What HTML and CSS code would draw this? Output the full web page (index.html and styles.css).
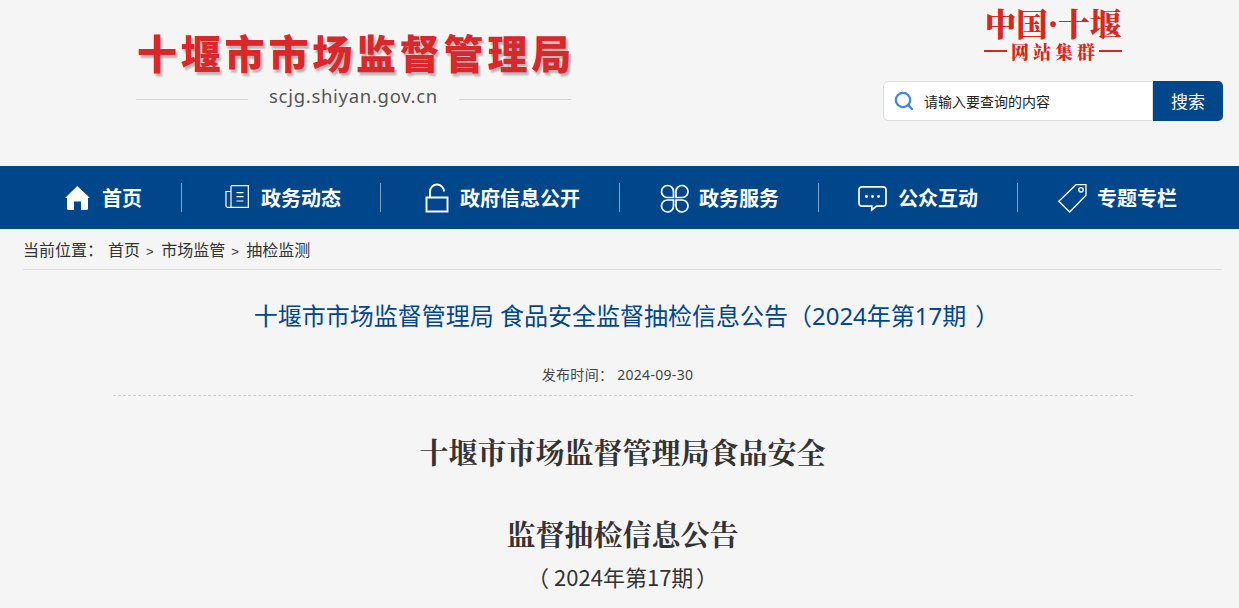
FILE: index.html
```html
<!DOCTYPE html>
<html lang="zh-CN">
<head>
    <meta charset="UTF-8">
    <title>食品安全监督抽检信息公告</title>
    <link rel="stylesheet" href="styles.css">
</head>
<body>
    <!-- 头部 -->
    <header class="header">
        <div class="logo">
            <div class="logo-name">十堰市市场监督管理局</div>
            <div class="logo-sub"><span class="logo-url">scjg.shiyan.gov.cn</span></div>
        </div>
        <div class="header-right">
            <div class="group-logo">
                <div class="group-name">中国·十堰</div>
                <div class="group-sub"><span>网站集群</span></div>
            </div>
            <form class="search">
                <div class="search-box">
                    <svg class="search-icon" viewBox="0 0 20 20" width="20" height="20">
                        <circle cx="9" cy="9" r="7.2" fill="none" stroke="#3f86e6" stroke-width="2.2"/>
                        <path d="M14.2 14.2L18 18" fill="none" stroke="#3f86e6" stroke-width="2.4" stroke-linecap="round"/>
                    </svg>
                    <span class="search-hint">请输入要查询的内容</span>
                </div>
                <button class="search-btn" type="button">搜索</button>
            </form>
        </div>
    </header>

    <!-- 导航 -->
    <nav class="nav">
        <a class="nav-item nav-first">
            <svg class="nav-icon" viewBox="0 0 30 30" width="30" height="30">
                <path d="M15.300 3L3 15h2v10.500Q5 27 6.500 27H12v-8.500h7V27h5.500q1.500 0 1.500-1.500V15h2z" fill="#fff"/>
            </svg>首页</a>
        <a class="nav-item">
            <svg class="nav-icon" viewBox="0 0 30 30" width="30" height="30" fill="none" stroke="#fff" stroke-width="1.2">
                <path d="M10 2.700h17.300v21.600H6.500a1.500 1.500 0 0 1-1.500-1.500V8.500h5"/>
                <path d="M10 2.700v21.600M15.500 9.700h7M15.500 13.700h7M15.500 18h7"/>
            </svg>政务动态</a>
        <a class="nav-item">
            <svg class="nav-icon" viewBox="0 0 30 30" width="30" height="30" fill="none" stroke="#fff" stroke-width="1.900">
                <path d="M10 14.500V8.500a7 7 0 0 1 14 0"/>
                <path d="M6.500 14.500h21v14h-21z"/>
            </svg>政府信息公开</a>
        <a class="nav-item">
            <svg class="nav-icon" viewBox="0 0 30 30" width="30" height="30" fill="none" stroke="#fff" stroke-width="1.700">
                <path d="M14.500 14.500H9a6 6 0 1 1 5.500-6z"/>
                <path d="M17 14.500h5.500a6 6 0 1 0-5.500-6z"/>
                <path d="M14.500 17H9a6 6 0 1 0 5.500 6z"/>
                <path d="M17 17h5.500a6 6 0 1 1-5.500 6z"/>
            </svg>政务服务</a>
        <a class="nav-item">
            <svg class="nav-icon" viewBox="0 0 30 30" width="30" height="30" fill="none" stroke="#fff" stroke-width="1.700">
                <path d="M4 3.800h21a3 3 0 0 1 3 3v13.400a3 3 0 0 1-3 3h-6.500L13.800 27v-3.800H4a3 3 0 0 1-3-3V6.800a3 3 0 0 1 3-3z"/>
                <circle cx="8.500" cy="13.500" r="1.400" fill="#fff" stroke="none"/>
                <circle cx="14.500" cy="13.500" r="1.400" fill="#fff" stroke="none"/>
                <circle cx="20.500" cy="13.500" r="1.400" fill="#fff" stroke="none"/>
            </svg>公众互动</a>
        <a class="nav-item nav-last">
            <svg class="nav-icon nav-tag" viewBox="0 0 30 30" width="30" height="30" fill="none" stroke="#fff" stroke-width="1.300">
                <path d="M19 1.700h10v10.500L12.700 29 1.800 18.300z"/>
                <circle cx="24" cy="6.800" r="2.200"/>
            </svg>专题专栏</a>
    </nav>

    <div class="crumb">当前位置：<span class="crumb-gap"></span>首页<i>&gt;</i>市场监管<i>&gt;</i>抽检监测</div>

    <main class="article">
        <h1 class="article-title">十堰市市场监督管理局 食品安全监督抽检信息公告（2024年第17期<span class="paren-r">）</span></h1>
        <p class="article-date">发布时间： 2024-09-30</p>
        <div class="article-body">
            <h2>十堰市市场监督管理局食品安全</h2>
            <h2>监督抽检信息公告</h2>
            <p class="issue"><span class="paren-l">（</span>2024年第17期<span class="paren-r">）</span></p>
        </div>
    </main>
</body>
</html>
```
FILE: styles.css
```css
/* 通用 */
html, body {
    height: 608px;
    overflow: hidden;
}
body {
    margin: 0;
    background-color: #f5f5f5;
    color: #333;
    font-family: "Noto Sans CJK SC", sans-serif;
    text-spacing-trim: space-all;
}

/* ========== 头部 ========== */
.header {
    display: flex;
    justify-content: space-between;
    height: 166px;
    padding: 0 16px 0 136px;
    box-sizing: border-box;
}
.logo {
    width: 435px;
    padding-top: 25px;
}
.logo-name {
    font-size: 40px;
    line-height: 54px;
    font-weight: 900;
    letter-spacing: 3.8px;
    margin-left: 1px;
    white-space: nowrap;
    color: #d9272b;
    text-shadow: 2px 3px 2px rgba(0, 0, 0, 0.25);
}
.logo-sub {
    display: flex;
    align-items: center;
    justify-content: center;
    margin-top: 4px;
    background: linear-gradient(#d4d4d4, #d4d4d4) 0 16px / 112px 1px no-repeat,
                linear-gradient(#d4d4d4, #d4d4d4) 100% 16px / 112px 1px no-repeat;
}
.logo-url {
    font-family: "Noto Sans", sans-serif;
    font-size: 18.500px;
    line-height: 26px;
    letter-spacing: 0.7px;
    color: #555;
}

.header-right {
    width: 340px;
}
.group-logo {
    width: 138px;
    margin: 6px 0 0 101px;
    color: #d7281f;
    text-align: center;
    font-family: "Noto Serif CJK SC", "Noto Sans CJK SC", serif;
    font-weight: 900;
}
.group-name {
    font-size: 31.500px;
    line-height: 34px;
    white-space: nowrap;
}
.group-sub {
    font-size: 18px;
    line-height: 22px;
    letter-spacing: 4px;
    text-indent: 4px;
    background: linear-gradient(#d7281f, #d7281f) 0 50% / 23px 2px no-repeat,
                linear-gradient(#d7281f, #d7281f) 100% 50% / 23px 2px no-repeat;
}
.search {
    display: flex;
    height: 40px;
    margin-top: 19px;
}
.search-box {
    display: flex;
    align-items: center;
    width: 270px;
    box-sizing: border-box;
    padding-left: 10px;
    background: #fff;
    border: 1px solid #ddd;
    border-radius: 5px 0 0 5px;
}
.search-icon {
    margin-right: 10px;
}
.search-hint {
    font-size: 14px;
    color: #222;
}
.search-btn {
    width: 70px;
    padding: 0 0 2px;
    border: none;
    border-radius: 0 5px 5px 0;
    background: #00468b;
    color: #fff;
    font-family: inherit;
    font-size: 17px;
}

/* ========== 导航 ========== */
.nav {
    display: flex;
    align-items: center;
    height: 63px;
    padding-left: 24px;
    background-color: #00468b;
}
.nav-item {
    display: flex;
    align-items: center;
    height: 29px;
    padding: 0 39px 0 40px;
    border-right: 1px solid rgba(255, 255, 255, 0.5);
    margin-right: -1px;
    color: #fff;
    font-size: 20px;
    font-weight: 700;
    white-space: nowrap;
}
.nav-first {
    padding-left: 38px;
}
.nav-last {
    border-right: none;
}
.nav-icon {
    flex: none;
    margin-right: 10px;
}

/* ========== 当前位置 ========== */
.crumb {
    margin: 0 17px 0 23px;
    height: 40px;
    line-height: 41px;
    font-size: 16px;
    color: #333;
    border-bottom: 1px solid #ddd;
}
.crumb-gap {
    display: inline-block;
    width: 5px;
}
.crumb i {
    margin: 0 7.500px 0 6px;
    font-style: normal;
    font-family: "Liberation Sans", sans-serif;
    font-size: 13px;
}

/* ========== 正文 ========== */
.article {
    margin: 0 17px 0 23px;
}
.article-title {
    margin: 27px 0 0;
    font-family: "Noto Sans", "Noto Sans CJK SC", sans-serif;
    font-size: 24px;
    line-height: 38px;
    font-weight: 400;
    text-align: center;
    color: #00468b;
}
.article-date {
    margin: 29px auto 0;
    height: 31px;
    width: 1020px;
    line-height: 22px;
    font-family: "Noto Sans", "Noto Sans CJK SC", sans-serif;
    font-size: 14px;
    letter-spacing: 0.3px;
    color: #444;
    text-align: center;
    text-indent: -10px;
    border-bottom: 1px dashed #ccc;
}
.article-body {
    width: 1020px;
    margin: -2px auto 0;
    text-align: center;
}
.article-body h2 {
    margin: 0;
    padding-top: 34px;
    height: 48px;
    line-height: 48px;
    font-family: "Noto Serif CJK SC", "Noto Sans CJK SC", serif;
    font-size: 29px;
    font-weight: 700;
    color: #333;
}
.issue {
    margin: 0;
    font-family: "Noto Sans CJK SC", sans-serif;
    font-size: 22px;
    line-height: 36px;
    color: #333;
}
/* 括号字形在全角框内居中 */
.paren-l {
    font-feature-settings: "halt";
    padding-right: 5px;
}
.paren-r {
    font-feature-settings: "halt";
    padding-left: 9px;
    padding-right: 4px;
}
.issue .paren-r {
    padding-left: 2.500px;
    padding-right: 0;
}
```
